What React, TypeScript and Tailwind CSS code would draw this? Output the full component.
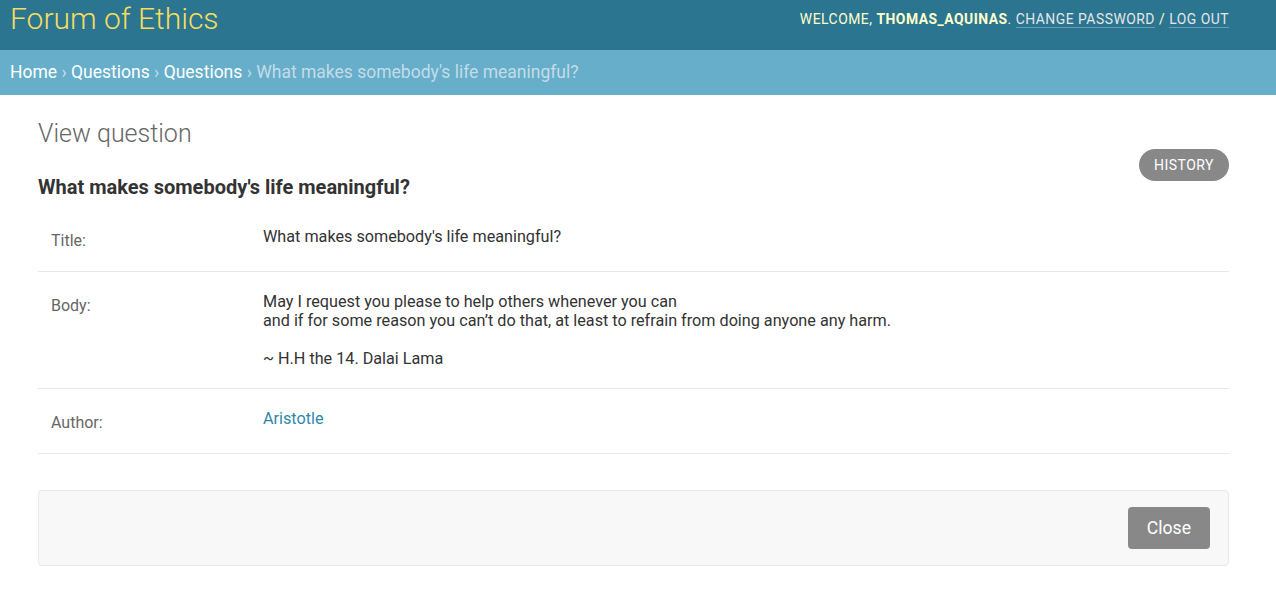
const rows = [
  { label: "Title:", value: <p>What makes somebody's life meaningful?</p> },
  {
    label: "Body:",
    value: (
      <div className="leading-[19px]">
        <p>May I request you please to help others whenever you can</p>
        <p>and if for some reason you can’t do that, at least to refrain from doing anyone any harm.</p>
        <p>&nbsp;</p>
        <p>~ H.H the 14. Dalai Lama</p>
      </div>
    ),
  },
  {
    label: "Author:",
    value: (
      <a href="#" className="text-[#2f87a8]">
        Aristotle
      </a>
    ),
  },
];

export default function App() {
  return (
    <div className="min-h-screen bg-white font-['Roboto',sans-serif] text-[#333]">
      {/* Header */}
      <header className="flex h-[50px] items-start justify-between bg-[#2b7590] pl-[10px] pr-[47px]">
        <h1 className="pt-[1px] text-[30px] font-light leading-[36px] text-[#f5dd5d]">Forum of Ethics</h1>
        <div className="pt-[11px] text-[13.9px] uppercase leading-[16px] tracking-[0.5px] text-[#ffffcc]">
          Welcome, <strong className="font-bold">Thomas_Aquinas</strong>.{" "}
          <a href="#" className="border-b border-white/30 text-[#e6e6e6]">Change password</a> /{" "}
          <a href="#" className="border-b border-white/30 text-[#e6e6e6]">Log out</a>
        </div>
      </header>

      {/* Breadcrumbs */}
      <nav className="h-[45px] bg-[#66aec9] px-[10px] text-[17.5px] leading-[45px] text-white">
        <a href="#">Home</a> <span className="text-[#c4dce8]">›</span> <a href="#">Questions</a>{" "}
        <span className="text-[#c4dce8]">›</span> <a href="#">Questions</a>{" "}
        <span className="text-[#c4dce8]">› What makes somebody's life meaningful?</span>
      </nav>

      {/* Content */}
      <main className="pl-[38px] pr-[47px] pt-[23px]">
        <h1 className="text-[25px] font-light leading-[32px] text-[#666]">View question</h1>

        <div className="flex items-start justify-between">
          <h2 className="pt-[25px] text-[20px] font-bold leading-[24px] text-[#333]">
            What makes somebody's life meaningful?
          </h2>
          <a
            href="#"
            className="mt-[-1px] flex h-[32px] items-center rounded-full bg-[#888] px-[15px] text-[14px] uppercase tracking-[0.5px] text-white"
          >
            History
          </a>
        </div>

        <div className="mt-[8px]">
          {rows.map((r) => (
            <div key={r.label} className="flex border-b border-[#e8e8e8]">
              <div className="w-[225px] shrink-0 pb-[20px] pl-[13px] pt-[24px] text-[16px] leading-[20px] text-[#666]">
                {r.label}
              </div>
              <div className="pb-[20px] pt-[20px] text-[16.2px] leading-[20px] text-[#333]">{r.value}</div>
            </div>
          ))}
        </div>

        <div className="mt-[36px] flex justify-end rounded-[4px] border border-[#e8e8e8] bg-[#f8f8f8] px-[18px] py-[16px]">
          <button className="h-[42px] rounded-[4px] bg-[#888] px-[19px] text-[17.6px] text-white">Close</button>
        </div>
      </main>
    </div>
  );
}
